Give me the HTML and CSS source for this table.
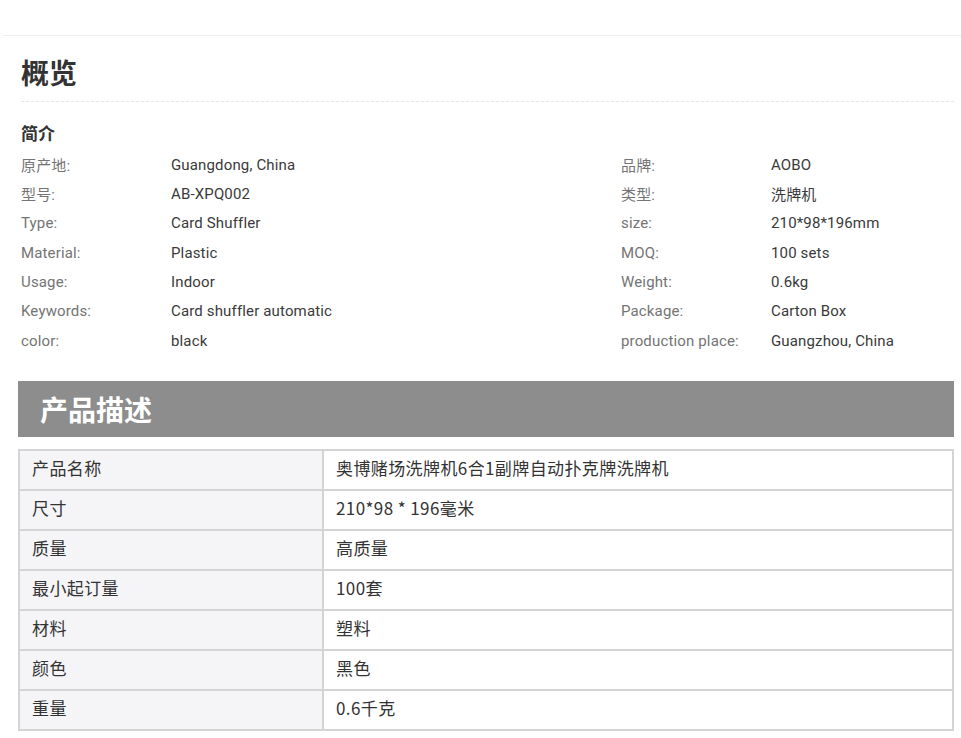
FILE: index.html
```html
<!DOCTYPE html>
<html lang="zh">
<head>
<meta charset="utf-8">
<title>概览</title>
<link rel="stylesheet" href="styles.css">
</head>
<body>
<div class="topline"></div>
<div class="page">
  <section class="overview">
    <h1 class="title">概览</h1>
    <h2 class="subtitle">简介</h2>
    <div class="attrs">
      <div class="lbl">原产地:</div><div class="val">Guangdong, China</div>
      <div class="lbl">品牌:</div><div class="val">AOBO</div>
      <div class="lbl">型号:</div><div class="val">AB-XPQ002</div>
      <div class="lbl">类型:</div><div class="val">洗牌机</div>
      <div class="lbl">Type:</div><div class="val">Card Shuffler</div>
      <div class="lbl">size:</div><div class="val">210*98*196mm</div>
      <div class="lbl">Material:</div><div class="val">Plastic</div>
      <div class="lbl">MOQ:</div><div class="val">100 sets</div>
      <div class="lbl">Usage:</div><div class="val">Indoor</div>
      <div class="lbl">Weight:</div><div class="val">0.6kg</div>
      <div class="lbl">Keywords:</div><div class="val">Card shuffler automatic</div>
      <div class="lbl">Package:</div><div class="val">Carton Box</div>
      <div class="lbl">color:</div><div class="val">black</div>
      <div class="lbl">production place:</div><div class="val">Guangzhou, China</div>
    </div>
  </section>
  <section class="desc">
    <div class="bar">产品描述</div>
    <table class="spec">
      <tr><td class="k">产品名称</td><td class="v">奥博赌场洗牌机6合1副牌自动扑克牌洗牌机</td></tr>
      <tr><td class="k">尺寸</td><td class="v">210*98 * 196毫米</td></tr>
      <tr><td class="k">质量</td><td class="v">高质量</td></tr>
      <tr><td class="k">最小起订量</td><td class="v">100套</td></tr>
      <tr><td class="k">材料</td><td class="v">塑料</td></tr>
      <tr><td class="k">颜色</td><td class="v">黑色</td></tr>
      <tr><td class="k">重量</td><td class="v">0.6千克</td></tr>
    </table>
  </section>
</div>
</body>
</html>
```
FILE: styles.css
```css
html, body {
  margin: 0;
  padding: 0;
  background: #ffffff;
}
body {
  font-family: Roboto, "Noto Sans CJK SC", sans-serif;
  color: #333333;
}
.topline {
  margin: 35px 0 0 3px;
  border-top: 1px solid #eeeeee;
}
.page {
  padding: 0 7px 0 18px;
}
.overview {
  padding-left: 3px;
}
.title {
  margin: 16px 0 0 0;
  font-family: "Noto Sans CJK SC", sans-serif;
  font-size: 28px;
  font-weight: 700;
  line-height: 40px;
  color: #333333;
  padding-bottom: 9px;
  border-bottom: 1px dashed #e6e6e6;
}
.subtitle {
  margin: 20px 0 0 0;
  font-family: "Noto Sans CJK SC", sans-serif;
  font-size: 17px;
  font-weight: 700;
  line-height: 22px;
  color: #333333;
}
.attrs {
  margin-top: 6px;
  display: grid;
  grid-template-columns: 150px 450px 150px 1fr;
  grid-auto-rows: 29.33px;
  align-items: center;
  font-size: 15px;
  letter-spacing: 0.15px;
}
.lbl {
  color: #747474;
  font-weight: 400;
}
.val {
  color: #3a3a3a;
}
.desc {
  margin-top: 26px;
}
.bar {
  height: 56px;
  line-height: 56px;
  background: #8d8d8d;
  color: #ffffff;
  font-family: "Noto Sans CJK SC", sans-serif;
  font-size: 28px;
  font-weight: 700;
  padding-left: 22px;
}
.spec {
  margin-top: 12px;
  width: 100%;
  border-collapse: collapse;
  font-family: "Noto Sans CJK SC", sans-serif;
  font-size: 17px;
  letter-spacing: 0.4px;
  color: #333333;
}
.spec td {
  border: 2px solid #d4d4d4;
  height: 34px;
  padding: 0 12px 4px 12px;
  line-height: 20px;
  font-weight: 400;
}
.spec .k {
  width: 278px;
  background: #f5f5f7;
}
.spec .v {
  background: #ffffff;
}
```
